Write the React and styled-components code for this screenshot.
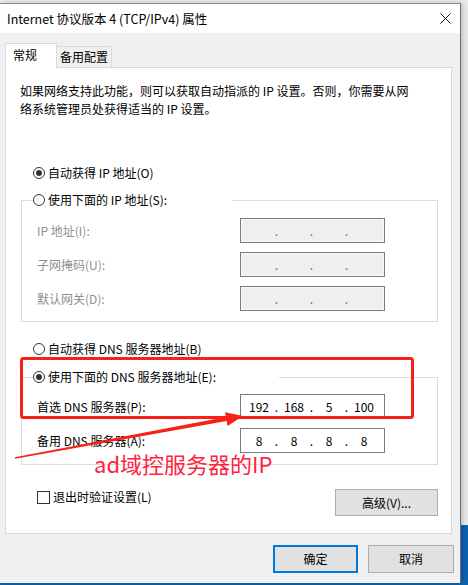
import styled, { createGlobalStyle } from "styled-components";

const GlobalStyle = createGlobalStyle`
  html, body {
    margin: 0;
    padding: 0;
  }
  body {
    font-family: "Noto Sans CJK SC", "Noto Sans", sans-serif;
    font-size: 12px;
    color: #000;
  }
`;

const Desktop = styled.div`
  position: relative;
  width: 468px;
  height: 585px;
  overflow: hidden;
  box-sizing: border-box;
  padding-top: 3px;
  display: flex;
  align-items: flex-start;
  background: linear-gradient(to bottom, #e9e9e9 0, #e9e9e9 525px, #0b63b0 525px);
`;

const Window = styled.div`
  width: 461px;
  height: 580px;
  box-sizing: border-box;
  border-top: 1px solid #8c8c8c;
  border-right: 1px solid #6f6f6f;
  background: #f0f0f0;
  display: flex;
  flex-direction: column;
  box-shadow: 2px 0 4px rgba(0, 0, 0, 0.18);
`;

const TitleBar = styled.div`
  height: 29px;
  flex: none;
  background: #fff;
  display: flex;
  align-items: center;
  justify-content: space-between;
  padding: 0 9px 0 7px;
  line-height: 16px;
  font-size: 12.5px;
`;

const Body = styled.div`
  display: flex;
  flex-direction: column;
  padding: 10px 6px 0 5px;
`;

const TabRow = styled.div`
  display: flex;
  align-items: flex-end;
  height: 24px;
`;

const Tab = styled.div`
  box-sizing: border-box;
  height: ${(p) => (p.$active ? "25px" : "21px")};
  width: ${(p) => p.$w}px;
  margin-bottom: ${(p) => (p.$active ? "-1px" : "0")};
  position: relative;
  z-index: ${(p) => (p.$active ? 1 : 0)};
  background: ${(p) => (p.$active ? "#fff" : "#f0f0f0")};
  border: 1px solid #d9d9d9;
  border-bottom: none;
  border-left: ${(p) => (p.$active ? "1px solid #d9d9d9" : "none")};
  padding-left: ${(p) => (p.$active ? "7px" : "3px")};
  display: flex;
  align-items: center;
  line-height: 16px;
  padding-bottom: ${(p) => (p.$active ? "2px" : "0")};
`;

const Panel = styled.div`
  width: 447px;
  box-sizing: border-box;
  background: #fff;
  border: 1px solid #d9d9d9;
  padding: 14px 13px 17px 15px;
  display: flex;
  flex-direction: column;
`;

const Description = styled.div`
  line-height: 18px;
  margin-left: -1px;
`;

const RadioRow = styled.div`
  display: flex;
  align-items: center;
  gap: 3px;
  height: 16px;
  line-height: 16px;
  margin-top: ${(p) => p.$mt || 0}px;
  margin-left: ${(p) => p.$ml || 0}px;
`;

const RadioCircle = styled.span`
  width: 12px;
  height: 12px;
  box-sizing: border-box;
  border: 1px solid #333;
  border-radius: 50%;
  display: flex;
  align-items: center;
  justify-content: center;
  background: #fff;
  &::after {
    content: "";
    width: 6px;
    height: 6px;
    border-radius: 50%;
    background: ${(p) => (p.$checked ? "#333" : "transparent")};
  }
`;

const Group = styled.fieldset`
  margin: ${(p) => p.$mt}px 0 0 0;
  padding: 0 0 ${(p) => p.$pb}px 11px;
  border: 1px solid #dcdcdc;
  min-inline-size: 0;
`;

const Legend = styled.legend`
  padding: 0;
  width: ${(p) => p.$w}px;
  background: #fff;
`;

const FieldGrid = styled.div`
  display: grid;
  grid-template-columns: 207px 145px;
  row-gap: 9px;
  padding-top: ${(p) => p.$pt}px;
  align-items: center;
`;

const FieldLabel = styled.div`
  margin-left: 4px;
  line-height: 16px;
  color: ${(p) => (p.$disabled ? "#8f8f8f" : "#000")};
`;

const IpBox = styled.div`
  width: 145px;
  height: 25px;
  box-sizing: border-box;
  border: 1px solid #7a7a7a;
  background: ${(p) => (p.$disabled ? "#efefef" : "#fff")};
  box-shadow: ${(p) => (p.$disabled ? "inset 0 0 0 1px #fafafa" : "none")};
  padding-left: 3px;
  display: grid;
  grid-template-columns: 30px 5px 30px 5px 30px 5px 30px;
  align-items: center;
  justify-items: center;
  line-height: 23px;
  color: ${(p) => (p.$disabled ? "#6d6d6d" : "#000")};
`;

const BottomRow = styled.div`
  display: flex;
  justify-content: space-between;
  align-items: flex-start;
  margin-top: 24px;
`;

const CheckRow = styled.div`
  display: flex;
  align-items: center;
  gap: 3px;
  height: 16px;
  line-height: 16px;
  margin-left: 16px;
`;

const CheckBox = styled.span`
  width: 13px;
  height: 13px;
  box-sizing: border-box;
  border: 1px solid #333;
  background: #fff;
`;

const Button = styled.div`
  box-sizing: border-box;
  width: ${(p) => p.$w}px;
  height: ${(p) => p.$h}px;
  background: #e1e1e1;
  border: ${(p) => (p.$default ? "2px solid #0078d7" : "1px solid #adadad")};
  display: flex;
  align-items: center;
  justify-content: center;
  line-height: 16px;
`;

const ButtonBar = styled.div`
  display: flex;
  justify-content: flex-end;
  gap: 10px;
  margin-top: 11px;
`;

const Annotation = styled.svg`
  position: absolute;
  left: 0;
  top: 0;
  pointer-events: none;
`;

const AnnotationText = styled.div`
  position: absolute;
  left: 94px;
  top: 455px;
  font-size: 22px;
  line-height: 16px;
  color: #ff2340;
  white-space: nowrap;
`;

const Radio = ({ checked, children, ml, mt }) => (
  <RadioRow $ml={ml} $mt={mt}>
    <RadioCircle $checked={checked} />
    <span>{children}</span>
  </RadioRow>
);

const IpField = ({ parts, disabled }) => (
  <IpBox $disabled={disabled}>
    {parts.flatMap((p, i) => [
      i > 0 ? <span key={"d" + i}>.</span> : null,
      <span key={"p" + i}>{p}</span>,
    ])}
  </IpBox>
);

const empty = ["", "", "", ""];

export default function App() {
  return (
    <>
      <GlobalStyle />
      <Desktop>
        <Window>
          <TitleBar>
            <span>Internet 协议版本 4 (TCP/IPv4) 属性</span>
            <svg width="11" height="11" viewBox="0 0 11 11">
              <path d="M0.5 0.5 L10.5 10.5 M10.5 0.5 L0.5 10.5" stroke="#111" strokeWidth="1" />
            </svg>
          </TitleBar>
          <Body>
            <TabRow>
              <Tab $active $w={52}>常规</Tab>
              <Tab $w={55}>备用配置</Tab>
            </TabRow>
            <Panel>
              <Description>
                如果网络支持此功能，则可以获取自动指派的 IP 设置。否则，你需要从网
                <br />
                络系统管理员处获得适当的 IP 设置。
              </Description>
              <Radio checked ml={12} mt={47}>自动获得 IP 地址(O)</Radio>
              <Group $mt={11} $pb={10}>
                <Legend $w={199}>
                  <Radio>使用下面的 IP 地址(S):</Radio>
                </Legend>
                <FieldGrid $pt={10}>
                  <FieldLabel $disabled>IP 地址(I):</FieldLabel>
                  <IpField parts={empty} disabled />
                  <FieldLabel $disabled>子网掩码(U):</FieldLabel>
                  <IpField parts={empty} disabled />
                  <FieldLabel $disabled>默认网关(D):</FieldLabel>
                  <IpField parts={empty} disabled />
                </FieldGrid>
              </Group>
              <Radio ml={12} mt={19}>自动获得 DNS 服务器地址(B)</Radio>
              <Group $mt={12} $pb={11}>
                <Legend $w={246}>
                  <Radio checked>使用下面的 DNS 服务器地址(E):</Radio>
                </Legend>
                <FieldGrid $pt={9}>
                  <FieldLabel>首选 DNS 服务器(P):</FieldLabel>
                  <IpField parts={["192", "168", "5", "100"]} />
                  <FieldLabel>备用 DNS 服务器(A):</FieldLabel>
                  <IpField parts={["8", "8", "8", "8"]} />
                </FieldGrid>
              </Group>
              <BottomRow>
                <CheckRow>
                  <CheckBox />
                  <span>退出时验证设置(L)</span>
                </CheckRow>
                <Button $w={103} $h={27}>高级(V)...</Button>
              </BottomRow>
            </Panel>
            <ButtonBar>
              <Button $w={85} $h={28} $default>确定</Button>
              <Button $w={86} $h={28}>取消</Button>
            </ButtonBar>
          </Body>
        </Window>
        <Annotation width="468" height="585" viewBox="0 0 468 585">
          <rect x="21.5" y="358.5" width="391" height="59" rx="2" fill="none" stroke="#f8211a" strokeWidth="3" />
          <polygon
            points="14.9,457.3 225.9,417.1 225.0,412.2 243,416 227.6,426.0 226.7,421.1 15.1,458.7"
            fill="#f8211a"
          />
        </Annotation>
        <AnnotationText>ad域控服务器的IP</AnnotationText>
      </Desktop>
    </>
  );
}
